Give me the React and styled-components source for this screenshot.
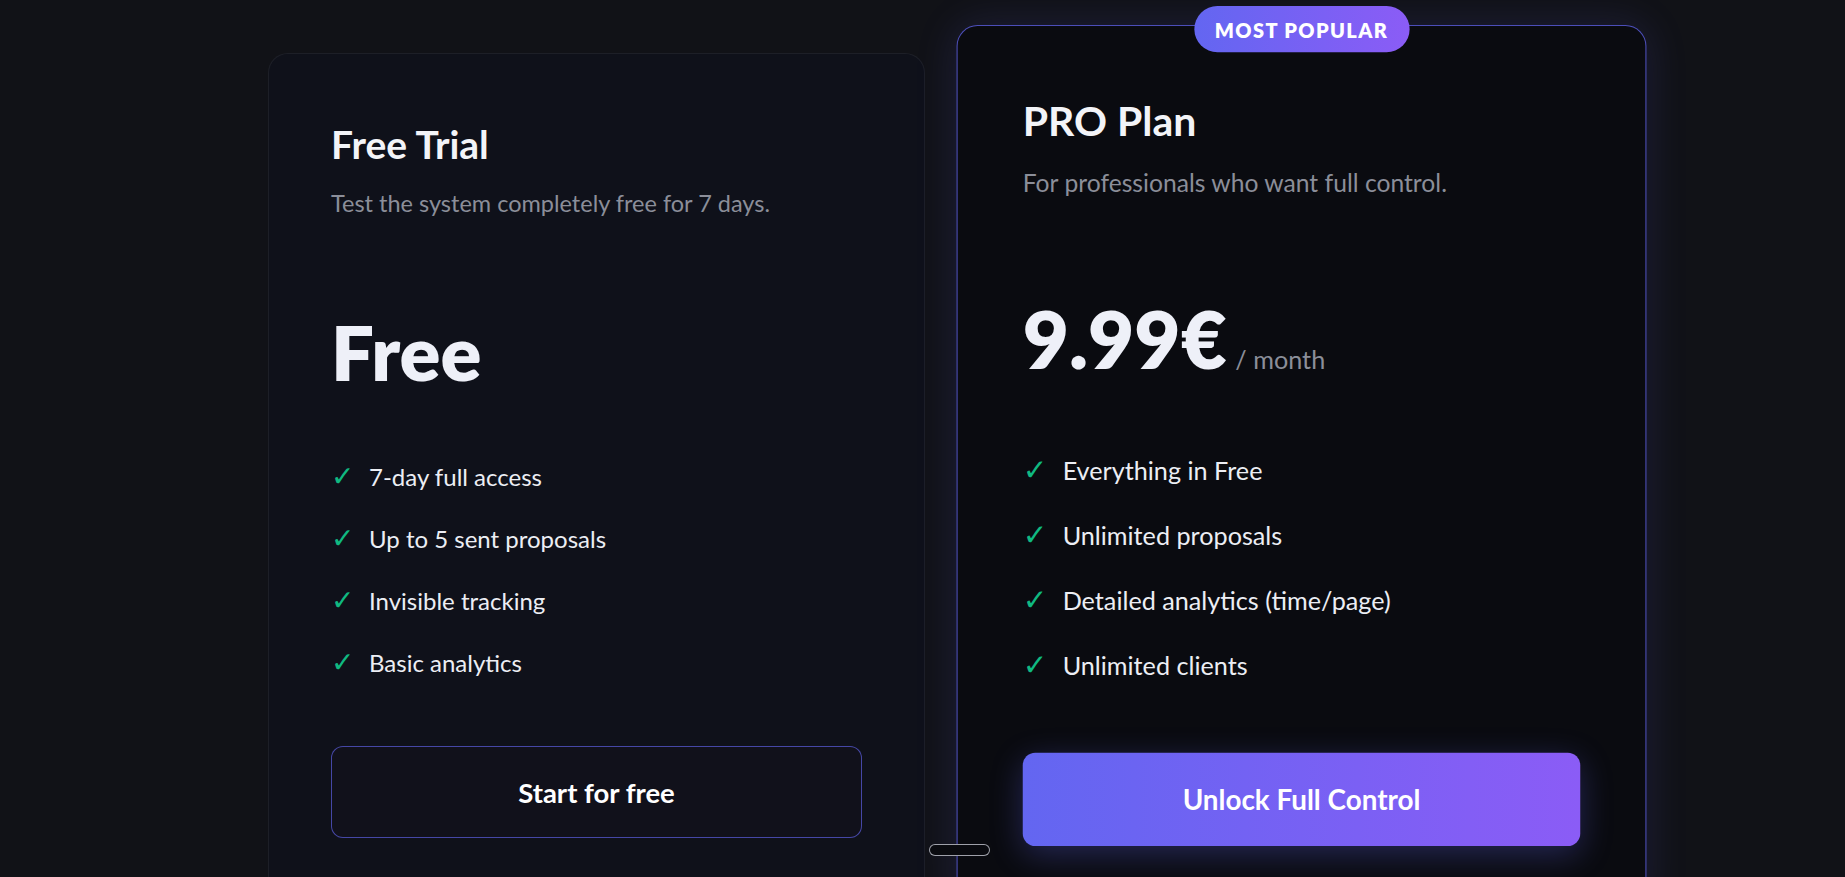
import React from "react";
import styled, { createGlobalStyle, css } from "styled-components";

const GlobalStyle = createGlobalStyle`
  html, body {
    margin: 0;
    padding: 0;
    background: #111217;
    font-family: "Lato", "Inter", sans-serif;
    overflow: hidden;
  }
  * { box-sizing: border-box; }
`;

const plans = [
  {
    id: "free",
    name: "Free Trial",
    blurb: "Test the system completely free for 7 days.",
    price: "Free",
    period: null,
    features: [
      "7-day full access",
      "Up to 5 sent proposals",
      "Invisible tracking",
      "Basic analytics",
    ],
    cta: "Start for free",
  },
  {
    id: "pro",
    name: "PRO Plan",
    blurb: "For professionals who want full control.",
    price: "9.99€",
    period: "/ month",
    features: [
      "Everything in Free",
      "Unlimited proposals",
      "Detailed analytics (time/page)",
      "Unlimited clients",
    ],
    cta: "Unlock Full Control",
    popular: true,
  },
];

const Pricing = () => {
  return (
    <Section>
      {plans.map((plan) => (
        <Card key={plan.id} $popular={plan.popular}>
          {plan.popular && <Badge>MOST POPULAR</Badge>}
          <Title>{plan.name}</Title>
          <Blurb>{plan.blurb}</Blurb>
          <PriceRow>
            <Price>{plan.price}</Price>
            {plan.period && <Period>{plan.period}</Period>}
          </PriceRow>
          <Features>
            {plan.features.map((f) => (
              <Feature key={f}>
                <Check>✓</Check>
                {f}
              </Feature>
            ))}
          </Features>
          <CtaButton $popular={plan.popular}>{plan.cta}</CtaButton>
        </Card>
      ))}
      <ScrollPill />
    </Section>
  );
};

const Section = styled.section`
  position: relative;
  height: 100vh;
  display: flex;
  align-items: flex-start;
  gap: 48px;
  padding: 53px 0 0 268px;
`;

const Card = styled.div`
  position: relative;
  flex: 0 0 657px;
  width: 657px;
  padding: 68px 62px 62px;
  background: #0f111a;
  border: 1px solid rgba(255, 255, 255, 0.06);
  border-radius: 20px;
  color: #eef0f8;
  ${(p) =>
    p.$popular &&
    css`
      background: #0a0b10;
      border-color: rgba(99, 102, 241, 0.75);
      transform-origin: top center;
      transform: translateY(-28px) scale(1.05);
      box-shadow: 0 0 40px rgba(99, 102, 241, 0.16);
    `}
`;

const Badge = styled.div`
  position: absolute;
  top: -19px;
  left: 50%;
  transform: translateX(-50%);
  height: 44px;
  padding: 0 20px;
  display: flex;
  align-items: center;
  border-radius: 999px;
  background: linear-gradient(90deg, #6366f1, #8b5cf6);
  color: #fff;
  font-size: 19px;
  font-weight: 800;
  letter-spacing: 1.3px;
  white-space: nowrap;
`;

const Title = styled.h3`
  margin: 0;
  font-size: 39px;
  line-height: 44px;
  font-weight: 700;
  color: #f3f4f8;
`;

const Blurb = styled.p`
  margin: 21px 0 0;
  font-size: 23.5px;
  line-height: 32px;
  color: #8b8e99;
`;

const PriceRow = styled.div`
  margin-top: 88px;
  display: flex;
  align-items: baseline;
  gap: 8px;
  height: 90px;
`;

const Price = styled.span`
  font-size: 76px;
  line-height: 90px;
  font-weight: 800;
  color: #eef0f8;
`;

const Period = styled.span`
  font-size: 24px;
  color: #8b8e99;
`;

const Features = styled.ul`
  list-style: none;
  margin: 64px 0 0;
  padding: 0;
  display: flex;
  flex-direction: column;
  gap: 30px;
`;

const Feature = styled.li`
  display: flex;
  align-items: center;
  gap: 14px;
  font-size: 24px;
  line-height: 32px;
  color: #eceef4;
`;

const Check = styled.span`
  width: 24px;
  font-family: "DejaVu Sans", sans-serif;
  font-size: 28px;
  font-weight: 700;
  line-height: 32px;
  color: #10b981;
`;

const CtaButton = styled.button`
  display: block;
  width: 100%;
  height: 92px;
  margin-top: 67px;
  border-radius: 12px;
  border: 1px solid rgba(99, 102, 241, 0.65);
  background: #11111b;
  color: #fff;
  font-family: inherit;
  font-size: 27.5px;
  font-weight: 700;
  cursor: pointer;
  ${(p) =>
    p.$popular &&
    css`
      height: 89px;
      border: none;
      font-size: 26.5px;
      background: linear-gradient(90deg, #6366f1, #8b5cf6);
      box-shadow: 0 8px 30px rgba(99, 102, 241, 0.3);
    `}
`;

const ScrollPill = styled.div`
  position: absolute;
  left: 929px;
  top: 844px;
  width: 61px;
  height: 12px;
  border-radius: 999px;
  border: 1.5px solid rgba(210, 212, 222, 0.75);
  background: #0a0b10;
`;

const App = () => (
  <>
    <GlobalStyle />
    <Pricing />
  </>
);

export default App;
